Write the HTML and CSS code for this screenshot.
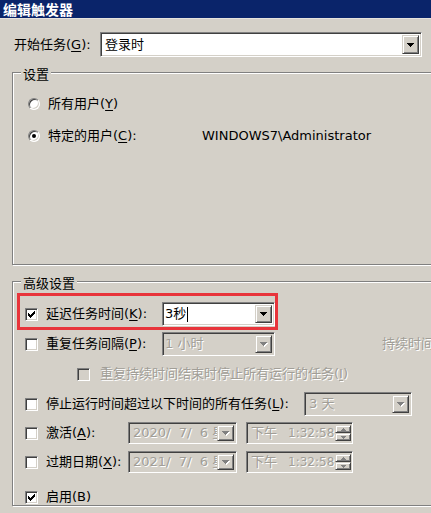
FILE: index.html
```html
<!DOCTYPE html>
<html lang="zh-CN">
<head>
<meta charset="utf-8">
<title>编辑触发器</title>
<link rel="stylesheet" href="styles.css">
</head>
<body>
<div class="window">
  <div class="titlebar">编辑触发器</div>

  <div class="start-row">
    <span class="start-label">开始任务(<u>G</u>):</span>
    <div class="combo start-combo">
      <span class="combo-text">登录时</span>
      <span class="btn drop-btn"><svg width="7" height="4" viewBox="0 0 7 4" shape-rendering="crispEdges"><path d="M0 0h7v1h-1v1h-1v1h-1v1h-1v-1h-1v-1h-1v-1h-1z" fill="#000"/></svg></span>
    </div>
  </div>

  <div class="group group-settings">
    <div class="legend">设置</div>
    <div class="radio-row first">
      <span class="radio"></span>
      <span>所有用户(<u>Y</u>)</span>
    </div>
    <div class="radio-row second">
      <span class="radio checked"></span>
      <span class="user-label">特定的用户(<u>C</u>):</span>
      <span class="user-name">WINDOWS7\Administrator</span>
    </div>
  </div>

  <div class="group group-advanced">
    <div class="legend">高级设置</div>

    <div class="highlight">
      <span class="check"><svg width="7" height="7" viewBox="0 0 7 7" shape-rendering="crispEdges"><path d="M0 2h1v1h1v1h1v-1h1v-1h1v-1h1v-1h1v3h-1v1h-1v1h-1v1h-1v1h-1v-1h-1v-1h-1v-1h-1z" fill="#000"/></svg></span>
      <span class="label-short">延迟任务时间(<u>K</u>):</span>
      <div class="combo small-combo">
        <span class="combo-text tight">3秒<span class="caret"></span></span>
        <span class="btn drop-btn"><svg width="7" height="4" viewBox="0 0 7 4" shape-rendering="crispEdges"><path d="M0 0h7v1h-1v1h-1v1h-1v1h-1v-1h-1v-1h-1v-1h-1z" fill="#000"/></svg></span>
      </div>
    </div>

    <div class="row row-repeat">
      <span class="check"></span>
      <span class="label-short">重复任务间隔(<u>P</u>):</span>
      <div class="combo small-combo disabled">
        <span class="combo-text tight">1 小时</span>
        <span class="btn drop-btn"><svg width="8" height="5" viewBox="0 0 8 5" shape-rendering="crispEdges"><path d="M1 1h7v1h-1v1h-1v1h-1v1h-1v-1h-1v-1h-1v-1h-1z" fill="#fff"/><path d="M0 0h7v1h-1v1h-1v1h-1v1h-1v-1h-1v-1h-1v-1h-1z" fill="#808080"/></svg></span>
      </div>
      <span class="dim duration">持续时间</span>
    </div>

    <div class="row row-sub">
      <span class="check disabled"></span>
      <span class="dim">重复持续时间结束时停止所有运行的任务(<u>I</u>)</span>
    </div>

    <div class="row row-stop">
      <span class="check"></span>
      <span class="label-long">停止运行时间超过以下时间的所有任务(<u>L</u>):</span>
      <div class="combo stop-combo disabled">
        <span class="combo-text">3 天</span>
        <span class="btn drop-btn"><svg width="8" height="5" viewBox="0 0 8 5" shape-rendering="crispEdges"><path d="M1 1h7v1h-1v1h-1v1h-1v1h-1v-1h-1v-1h-1v-1h-1z" fill="#fff"/><path d="M0 0h7v1h-1v1h-1v1h-1v1h-1v-1h-1v-1h-1v-1h-1z" fill="#808080"/></svg></span>
      </div>
    </div>

    <div class="row row-date first-date">
      <span class="check"></span>
      <span class="label-date">激活(<u>A</u>):</span>
      <div class="combo date-box disabled">
        <span class="combo-text date-text">2020/&nbsp;&nbsp;7/&nbsp;&nbsp;6 星期一</span>
        <span class="btn drop-btn"><svg width="8" height="5" viewBox="0 0 8 5" shape-rendering="crispEdges"><path d="M1 1h7v1h-1v1h-1v1h-1v1h-1v-1h-1v-1h-1v-1h-1z" fill="#fff"/><path d="M0 0h7v1h-1v1h-1v1h-1v1h-1v-1h-1v-1h-1v-1h-1z" fill="#808080"/></svg></span>
      </div>
      <div class="combo time-box disabled">
        <span class="combo-text time-text"><span>下午</span><span class="clock">1:32:58</span></span>
        <span class="spin">
          <span class="btn spin-btn"><svg width="5" height="3" viewBox="0 0 5 3" shape-rendering="crispEdges"><path d="M2 0h1v1h1v1h1v1h-5v-1h1v-1h1z" fill="#808080"/></svg></span>
          <span class="btn spin-btn"><svg width="5" height="3" viewBox="0 0 5 3" shape-rendering="crispEdges"><path d="M0 0h5v1h-1v1h-1v1h-1v-1h-1v-1h-1z" fill="#808080"/></svg></span>
        </span>
      </div>
    </div>

    <div class="row row-date second-date">
      <span class="check"></span>
      <span class="label-date">过期日期(<u>X</u>):</span>
      <div class="combo date-box disabled">
        <span class="combo-text date-text">2021/&nbsp;&nbsp;7/&nbsp;&nbsp;6 星期二</span>
        <span class="btn drop-btn"><svg width="8" height="5" viewBox="0 0 8 5" shape-rendering="crispEdges"><path d="M1 1h7v1h-1v1h-1v1h-1v1h-1v-1h-1v-1h-1v-1h-1z" fill="#fff"/><path d="M0 0h7v1h-1v1h-1v1h-1v1h-1v-1h-1v-1h-1v-1h-1z" fill="#808080"/></svg></span>
      </div>
      <div class="combo time-box disabled">
        <span class="combo-text time-text"><span>下午</span><span class="clock">1:32:58</span></span>
        <span class="spin">
          <span class="btn spin-btn"><svg width="5" height="3" viewBox="0 0 5 3" shape-rendering="crispEdges"><path d="M2 0h1v1h1v1h1v1h-5v-1h1v-1h1z" fill="#808080"/></svg></span>
          <span class="btn spin-btn"><svg width="5" height="3" viewBox="0 0 5 3" shape-rendering="crispEdges"><path d="M0 0h5v1h-1v1h-1v1h-1v-1h-1v-1h-1z" fill="#808080"/></svg></span>
        </span>
      </div>
    </div>

    <div class="row row-enable">
      <span class="check"><svg width="7" height="7" viewBox="0 0 7 7" shape-rendering="crispEdges"><path d="M0 2h1v1h1v1h1v-1h1v-1h1v-1h1v-1h1v3h-1v1h-1v1h-1v1h-1v1h-1v-1h-1v-1h-1v-1h-1z" fill="#000"/></svg></span>
      <span>启用(B)</span>
    </div>
  </div>
</div>
</body>
</html>
```

FILE: styles.css
```css
html, body {
  margin: 0;
  padding: 0;
  background: #d4d0c8;
}

.window {
  width: 431px;
  height: 513px;
  overflow: hidden;
  background: #d4d0c8;
  font-family: "DejaVu Sans", "Noto Sans CJK SC", sans-serif;
  font-size: 13px;
  line-height: 16px;
  color: #000;
  white-space: nowrap;
}

u {
  text-decoration: underline;
  text-underline-offset: 2px;
}

.titlebar {
  height: 19px;
  line-height: 19px;
  padding-left: 3px;
  background: #0a246a;
  color: #fff;
  font-weight: bold;
  font-size: 14px;
  font-family: "Noto Sans CJK SC", sans-serif;
  border-bottom: 1px solid #e6e3dd;
  box-sizing: border-box;
}

/* start row */
.start-row {
  display: flex;
  align-items: center;
  height: 25px;
  margin-top: 13px;
  padding-left: 14px;
}
.start-label {
  width: 86px;
  flex: none;
}

/* sunken field */
.combo {
  display: flex;
  align-items: stretch;
  box-sizing: border-box;
  border: 1px solid;
  border-color: #808080 #ffffff #ffffff #808080;
  box-shadow: inset 1px 1px 0 #404040, inset -1px -1px 0 #d4d0c8;
  background: #fff;
  padding: 2px;
  flex: none;
}
.combo.disabled {
  background: #d4d0c8;
  color: #a19e97;
}
.combo.disabled .combo-text {
  text-shadow: 1px 1px 0 #fff;
}
.combo-text {
  flex: 1;
  min-width: 0;
  overflow: hidden;
  display: flex;
  align-items: center;
  padding-left: 2px;
}
.combo-text.tight {
  padding-left: 0;
}

.start-combo {
  width: 322px;
  height: 25px;
}

/* raised button */
.btn {
  display: flex;
  align-items: center;
  justify-content: center;
  box-sizing: border-box;
  background: #d4d0c8;
  border: 1px solid;
  border-color: #d4d0c8 #404040 #404040 #d4d0c8;
  box-shadow: inset 1px 1px 0 #fff, inset -1px -1px 0 #808080;
}
.drop-btn {
  width: 17px;
  flex: none;
}
.btn svg {
  display: block;
}

/* group boxes */
.group {
  box-sizing: border-box;
  margin-left: 12px;
  width: 440px;
  border: 1px solid #808080;
  box-shadow: inset 1px 1px 0 #fff, 1px 1px 0 #fff;
}
.legend {
  width: max-content;
  height: 15px;
  line-height: 15px;
  margin: -7px 0 0 8px;
  padding: 0 2px;
  background: #d4d0c8;
  font-family: "Noto Sans CJK SC", sans-serif;
}

.group-settings {
  margin-top: 15px;
  height: 193px;
}
.group-advanced {
  margin-top: 16px;
  height: 225px;
}

/* radios */
.radio-row {
  display: flex;
  align-items: center;
  height: 16px;
  padding-left: 15px;
}
.radio-row.first {
  margin-top: 15px;
}
.radio-row.second {
  margin-top: 16px;
}
.radio {
  width: 12px;
  height: 12px;
  flex: none;
  box-sizing: border-box;
  border-radius: 50%;
  border: 1px solid;
  border-color: #808080 #ffffff #ffffff #808080;
  box-shadow: inset 1px 1px 0 #404040, inset -1px -1px 0 #d4d0c8;
  background: #fff;
  margin-right: 8px;
  display: flex;
  align-items: center;
  justify-content: center;
}
.radio.checked::after {
  content: "";
  width: 4px;
  height: 4px;
  border-radius: 50%;
  background: #000;
}
.user-label {
  width: 154px;
  flex: none;
}

/* checkboxes */
.check {
  width: 13px;
  height: 13px;
  flex: none;
  box-sizing: border-box;
  border: 1px solid;
  border-color: #808080 #ffffff #ffffff #808080;
  box-shadow: inset 1px 1px 0 #404040, inset -1px -1px 0 #d4d0c8;
  background: #fff;
  margin-right: 8px;
  display: flex;
  align-items: center;
  justify-content: center;
}
.check svg {
  display: block;
}
.check.disabled {
  background: #d4d0c8;
}

/* highlight */
.highlight {
  box-sizing: border-box;
  width: 261px;
  height: 37px;
  margin: 3px 0 0 4px;
  border: 3px solid #e8343b;
  padding: 5px 0 0 5px;
  display: flex;
  align-items: center;
}

.row {
  display: flex;
  align-items: center;
  padding-left: 12px;
}
.label-short {
  width: 116px;
  flex: none;
}
.small-combo {
  width: 113px;
  height: 24px;
}
.caret {
  display: inline-block;
  width: 1px;
  height: 15px;
  background: #000;
  margin-left: 1px;
}

.dim {
  color: #a19e97;
  text-shadow: 1px 1px 0 #fff;
}

.row-repeat {
  height: 24px;
  margin-top: 2px;
}
.duration {
  margin-left: 107px;
}

.row-sub {
  height: 20px;
  margin-top: 8px;
  padding-left: 64px;
}
.row-sub .check {
  margin-right: 10px;
}

.row-stop {
  height: 24px;
  margin-top: 8px;
}
.label-long {
  width: 258px;
  flex: none;
}
.stop-combo {
  width: 108px;
  height: 24px;
}

.row-date {
  height: 22px;
}
.first-date {
  margin-top: 6px;
}
.second-date {
  margin-top: 7px;
}
.label-date {
  width: 82px;
  flex: none;
}
.date-box {
  width: 109px;
  height: 22px;
}
.date-text {
  padding-left: 2px;
}
.time-box {
  width: 107px;
  height: 22px;
  margin-left: 9px;
  padding-right: 1px;
}
.time-text {
  padding-left: 2px;
}
.clock {
  margin-left: 11px;
  font-size: 12px;
}
.spin {
  display: flex;
  flex-direction: column;
  width: 16px;
  flex: none;
}
.spin-btn {
  flex: 1;
}

.row-enable {
  height: 16px;
  margin-top: 16px;
}
```
